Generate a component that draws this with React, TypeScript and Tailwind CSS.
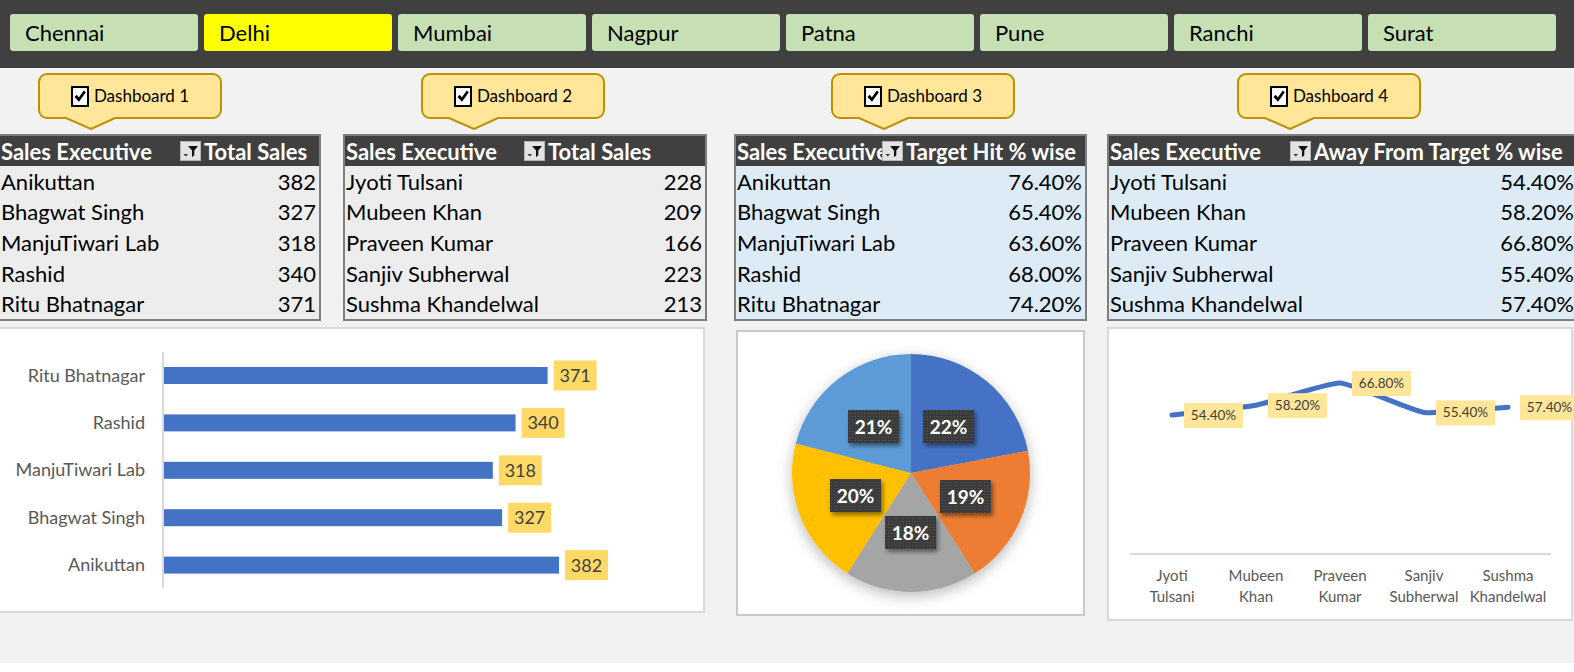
import React from "react";

const cities = ["Chennai", "Delhi", "Mumbai", "Nagpur", "Patna", "Pune", "Ranchi", "Surat"];

const t1 = [
  ["Anikuttan", "382"],
  ["Bhagwat Singh", "327"],
  ["ManjuTiwari Lab", "318"],
  ["Rashid", "340"],
  ["Ritu Bhatnagar", "371"],
];
const t2 = [
  ["Jyoti Tulsani", "228"],
  ["Mubeen Khan", "209"],
  ["Praveen Kumar", "166"],
  ["Sanjiv Subherwal", "223"],
  ["Sushma Khandelwal", "213"],
];
const t3 = [
  ["Anikuttan", "76.40%"],
  ["Bhagwat Singh", "65.40%"],
  ["ManjuTiwari Lab", "63.60%"],
  ["Rashid", "68.00%"],
  ["Ritu Bhatnagar", "74.20%"],
];
const t4 = [
  ["Jyoti Tulsani", "54.40%"],
  ["Mubeen Khan", "58.20%"],
  ["Praveen Kumar", "66.80%"],
  ["Sanjiv Subherwal", "55.40%"],
  ["Sushma Khandelwal", "57.40%"],
];

function CheckBox() {
  return (
    <svg width="18" height="21" viewBox="0 0 18 21" className="shrink-0">
      <rect x="1" y="1" width="16" height="19" fill="#fff" stroke="#000" strokeWidth="2" />
      <path d="M3.5 11 L5.8 8.8 L7.8 11.6 L12.8 4.5 L14.8 6.2 L8 15.8 Z" fill="#000" />
    </svg>
  );
}

function Callout({ label, className }: { label: string; className: string }) {
  return (
    <div className={`relative w-[184px] h-[57px] mt-[5px] mb-[4px] shrink-0 ${className}`}>
      <svg className="absolute left-0 top-0" width="184" height="57" viewBox="0 0 184 57">
        <path
          d="M9 1 H175 A8 8 0 0 1 183 9 V37 A8 8 0 0 1 175 45 H77 L53 56 L28 45 H9 A8 8 0 0 1 1 37 V9 A8 8 0 0 1 9 1 Z"
          fill="#ffe699"
          stroke="#bf9000"
          strokeWidth="2"
        />
      </svg>
      <div className="relative h-[46px] flex items-center justify-center gap-[5px] text-[17px] text-black">
        <CheckBox />
        <span>{label}</span>
      </div>
    </div>
  );
}

function FilterIcon() {
  return (
    <svg width="21" height="20" viewBox="0 0 21 20" className="shrink-0">
      <rect x="0.5" y="0.5" width="20" height="19" fill="#e3e3e3" stroke="#b5b5b5" />
      <path d="M8 5 H18 L14.3 9.5 V14.5 L12 16 V9.5 Z" fill="#111" />
      <path d="M3.5 13 H8 L5.75 15.5 Z" fill="#333" />
    </svg>
  );
}

function DataTable({
  rows,
  header2,
  outer,
  cell1,
  body,
}: {
  rows: string[][];
  header2: string;
  outer: string;
  cell1: string;
  body: string;
}) {
  return (
    <div className={`border-2 border-[#7f7f7f] shrink-0 ${outer}`}>
      <div className="h-[30px] bg-[#404040] flex items-center text-white font-bold text-[22px] whitespace-nowrap">
        <div className={`flex items-center shrink-0 ${cell1}`}>
          <div className="flex-1 overflow-hidden pl-[1px]">Sales Executive</div>
          <FilterIcon />
        </div>
        <div className="pl-[3px] overflow-hidden">{header2}</div>
      </div>
      <div className={body}>
        {rows.map(([n, v]) => (
          <div key={n} className="h-[30.6px] flex items-center justify-between pl-[1px] pr-[3px] text-[22px] text-black whitespace-nowrap">
            <span>{n}</span>
            <span>{v}</span>
          </div>
        ))}
      </div>
    </div>
  );
}

function BarChart() {
  const data = [
    ["Ritu Bhatnagar", 371],
    ["Rashid", 340],
    ["ManjuTiwari Lab", 318],
    ["Bhagwat Singh", 327],
    ["Anikuttan", 382],
  ] as [string, number][];
  return (
    <svg width="703" height="282" viewBox="0 0 703 282" className="block">
      <line x1="163" y1="23" x2="163" y2="259" stroke="#d9d9d9" strokeWidth="2" />
      {data.map(([n, v], i) => {
        const cy = 46.5 + i * 47.4;
        const w = v * 1.034;
        const lx = 164 + w + 6;
        return (
          <g key={n}>
            <text x="145" y={cy + 6} textAnchor="end" fontSize="18" fill="#595959">
              {n}
            </text>
            <rect x="164" y={cy - 8.5} width={w} height="17" fill="#4472c4" />
            <rect x={lx} y={cy - 15} width="43" height="30" fill="#ffd966" />
            <text x={lx + 21.5} y={cy + 6.5} textAnchor="middle" fontSize="18" fill="#404040">
              {v}
            </text>
          </g>
        );
      })}
    </svg>
  );
}

function PieChart() {
  const cx = 173;
  const cy = 141;
  const r = 119;
  const slices = [
    [22, "#4472c4"],
    [19, "#ed7d31"],
    [18, "#a5a5a5"],
    [20, "#ffc000"],
    [21, "#5b9bd5"],
  ] as [number, string][];
  let acc = 0;
  const paths = slices.map(([p, c]) => {
    const a0 = (acc / 100) * Math.PI * 2;
    acc += p;
    const a1 = (acc / 100) * Math.PI * 2;
    const x0 = cx + r * Math.sin(a0);
    const y0 = cy - r * Math.cos(a0);
    const x1 = cx + r * Math.sin(a1);
    const y1 = cy - r * Math.cos(a1);
    const large = a1 - a0 > Math.PI ? 1 : 0;
    return { d: `M${cx} ${cy} L${x0} ${y0} A${r} ${r} 0 ${large} 1 ${x1} ${y1} Z`, c };
  });
  const labels = [
    ["21%", 110, 78],
    ["22%", 185, 78],
    ["20%", 92, 147],
    ["19%", 202, 148],
    ["18%", 147, 184],
  ] as [string, number, number][];
  return (
    <svg width="345" height="282" viewBox="0 0 345 282" className="block">
      <defs>
        <filter id="pieShadow" x="-20%" y="-20%" width="140%" height="150%">
          <feDropShadow dx="0" dy="4" stdDeviation="7" floodColor="#000" floodOpacity="0.28" />
        </filter>
        <filter id="lblShadow" x="-20%" y="-20%" width="150%" height="160%">
          <feDropShadow dx="2" dy="3" stdDeviation="2" floodColor="#000" floodOpacity="0.45" />
        </filter>
        <pattern id="dots" width="3" height="3" patternUnits="userSpaceOnUse">
          <rect width="3" height="3" fill="#3b3b3b" />
          <rect width="1" height="1" fill="#565656" />
        </pattern>
      </defs>
      <g filter="url(#pieShadow)">
        {paths.map((p, i) => (
          <path key={i} d={p.d} fill={p.c} />
        ))}
      </g>
      {labels.map(([t, x, y]) => (
        <g key={t}>
          <rect x={x} y={y} width="51" height="33" fill="url(#dots)" filter="url(#lblShadow)" />
          <text x={x + 25.5} y={y + 23.5} textAnchor="middle" fontSize="19" fontWeight="700" fill="#fff">
            {t}
          </text>
        </g>
      ))}
    </svg>
  );
}

function smooth(pts: number[][]) {
  let d = `M${pts[0][0]} ${pts[0][1]}`;
  const k = 14;
  for (let i = 0; i < pts.length - 1; i++) {
    const p0 = pts[i - 1] || pts[i];
    const p1 = pts[i];
    const p2 = pts[i + 1];
    const p3 = pts[i + 2] || p2;
    const c1x = p1[0] + (p2[0] - p0[0]) / k;
    const c1y = p1[1] + (p2[1] - p0[1]) / k;
    const c2x = p2[0] - (p3[0] - p1[0]) / k;
    const c2y = p2[1] - (p3[1] - p1[1]) / k;
    d += ` C${c1x} ${c1y} ${c2x} ${c2y} ${p2[0]} ${p2[1]}`;
  }
  return d;
}

function LineChart() {
  const vals = [54.4, 58.2, 66.8, 55.4, 57.4];
  const xs = [63, 147, 231, 315, 399];
  const pts = vals.map((v, i) => [xs[i], 86 - (v - 54.4) * 2.58]);
  const cats = [
    ["Jyoti", "Tulsani"],
    ["Mubeen", "Khan"],
    ["Praveen", "Kumar"],
    ["Sanjiv", "Subherwal"],
    ["Sushma", "Khandelwal"],
  ];
  return (
    <svg width="462" height="290" viewBox="0 0 462 290" className="block overflow-visible">
      <line x1="21" y1="225" x2="442" y2="225" stroke="#d9d9d9" strokeWidth="2" />
      <path d={smooth(pts)} fill="none" stroke="#4472c4" strokeWidth="5" strokeLinecap="round" strokeLinejoin="round" />
      {pts.map(([x, y], i) => (
        <g key={i}>
          <rect x={x + 12} y={y - 12} width="59" height="25" fill="#ffe699" />
          <text x={x + 41.5} y={y + 5} textAnchor="middle" fontSize="13.5" fill="#404040">
            {vals[i].toFixed(2)}%
          </text>
        </g>
      ))}
      {cats.map(([a, b], i) => (
        <g key={a}>
          <text x={xs[i]} y="252" textAnchor="middle" fontSize="15" fill="#595959">
            {a}
          </text>
          <text x={xs[i]} y="273" textAnchor="middle" fontSize="15" fill="#595959">
            {b}
          </text>
        </g>
      ))}
    </svg>
  );
}

export default function App() {
  return (
    <div className="w-[1574px] h-[663px] bg-[#f2f2f2] overflow-hidden [font-family:Lato,'Liberation_Sans',sans-serif]">
      <div className="h-[68px] bg-[#404040] flex gap-[6px] pl-[10px] pt-[14px]">
        {cities.map((c) => (
          <div
            key={c}
            className={`w-[188px] h-[37px] shrink-0 rounded-[3px] flex items-center pl-[15px] text-[22px] text-black ${
              c === "Delhi" ? "bg-[#ffff00]" : "bg-[#c6e0b4]"
            }`}
          >
            {c}
          </div>
        ))}
      </div>
      <div className="flex items-start">
        <div className="w-[707px] shrink-0 flex flex-col">
          <div className="flex">
            <div className="w-[321px] flex flex-col">
              <Callout label="Dashboard 1" className="ml-[38px]" />
              <DataTable rows={t1} header2="Total Sales" outer="w-[321px] border-l-0" cell1="w-[201px]" body="bg-[#ededed]" />
            </div>
            <div className="w-[364px] ml-[22px] flex flex-col">
              <Callout label="Dashboard 2" className="ml-[78px]" />
              <DataTable rows={t2} header2="Total Sales" outer="w-[364px]" cell1="w-[200px]" body="bg-[#ededed]" />
            </div>
          </div>
          <div className="mt-[6px] w-[705px] h-[286px] bg-white border-2 border-l-0 border-[#d9d9d9]">
            <BarChart />
          </div>
        </div>
        <div className="ml-[27px] w-[353px] shrink-0 flex flex-col">
          <Callout label="Dashboard 3" className="ml-[97px]" />
          <DataTable rows={t3} header2="Target Hit % wise" outer="w-[353px]" cell1="w-[167px]" body="bg-[#ddebf7]" />
          <div className="mt-[9px] ml-[2px] w-[349px] h-[286px] bg-white border-2 border-[#c9c9c9]">
            <PieChart />
          </div>
        </div>
        <div className="ml-[20px] w-[472px] shrink-0 flex flex-col">
          <Callout label="Dashboard 4" className="ml-[130px]" />
          <DataTable rows={t4} header2="Away From Target % wise" outer="w-[472px]" cell1="w-[202px]" body="bg-[#ddebf7]" />
          <div className="mt-[6px] w-[466px] h-[294px] bg-white border-2 border-[#d9d9d9]">
            <LineChart />
          </div>
        </div>
      </div>
    </div>
  );
}
